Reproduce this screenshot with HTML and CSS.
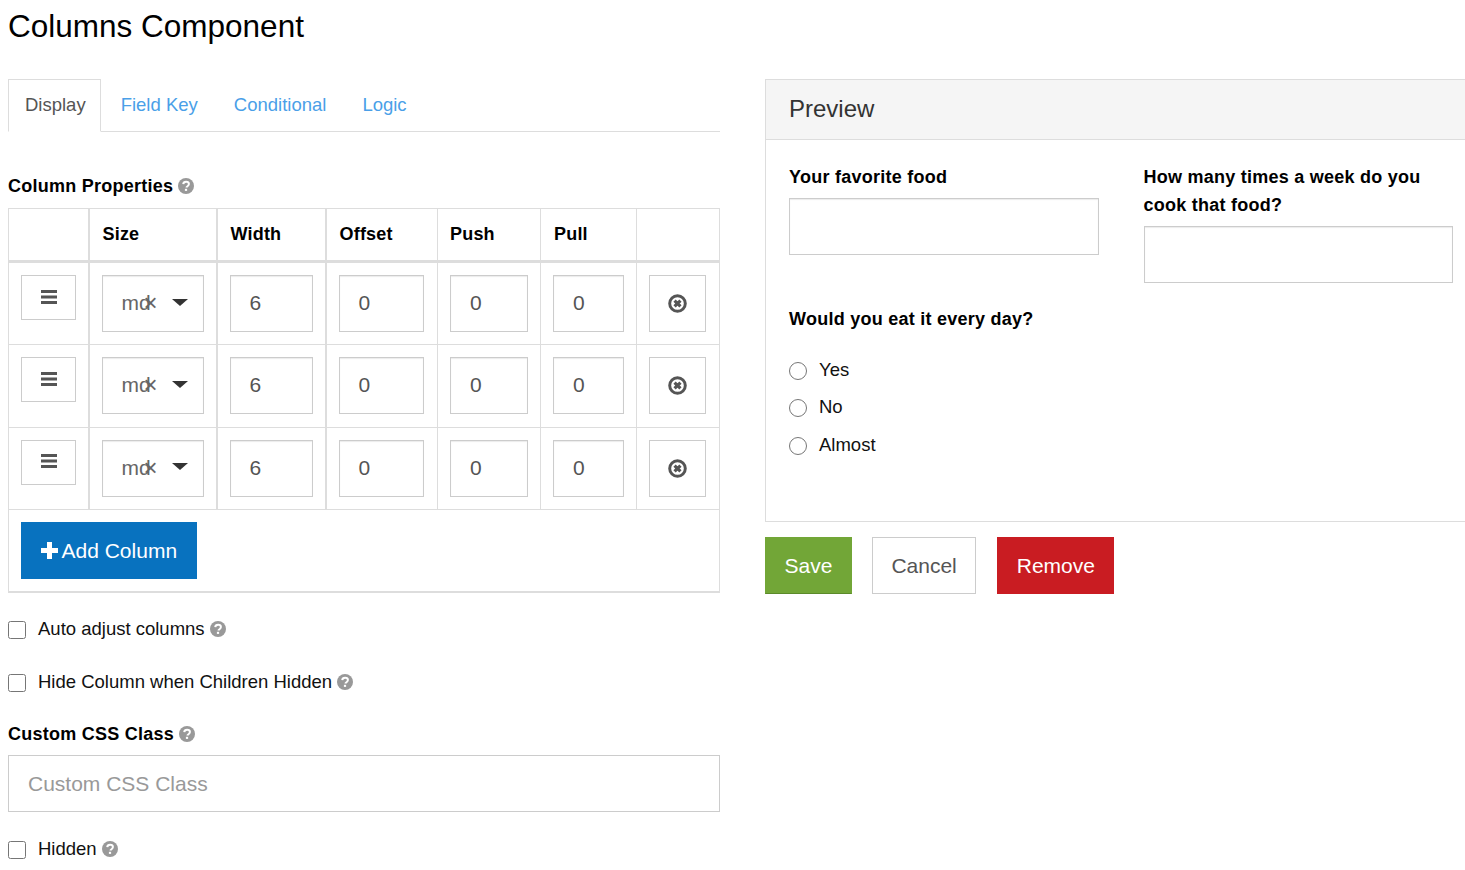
FILE: index.html
```html
<!DOCTYPE html>
<html lang="en">
<head>
    <meta charset="UTF-8">
    <meta name="viewport" content="width=device-width, initial-scale=1.0">
    <title>Columns Component</title>
    <link rel="stylesheet" href="styles.css">
</head>
<body>
    <svg class="defs" width="0" height="0">
        <symbol id="help" viewBox="0 0 16 16">
            <circle cx="8" cy="8" r="8" fill="#999"/>
            <path d="M5.2 6.2C5.4 4.6 6.6 3.8 8.1 3.8c1.600 0 2.800 1 2.800 2.300 0 1.200-.8 1.700-1.500 2.200-.6.4-.9.700-.9 1.300" fill="none" stroke="#fff" stroke-width="2"/>
            <rect x="6.900" y="10.800" width="2.200" height="2.100" fill="#fff"/>
        </symbol>
        <symbol id="bars" viewBox="0 0 16 14">
            <path d="M0 0h16v3H0zM0 5.500h16v3H0zM0 11h16v3H0z" fill="#555"/>
        </symbol>
        <symbol id="remove" viewBox="0 0 18 18">
            <circle cx="9" cy="9" r="7.400" fill="none" stroke="#555" stroke-width="2.800"/>
            <path d="M6.200 6.200l5.600 5.600M11.800 6.200l-5.600 5.600" stroke="#555" stroke-width="3"/>
        </symbol>
    </svg>

    <h1 class="title">Columns Component</h1>

    <div class="layout">
        <div class="left">
            <div class="tabs">
                <a class="tab active" href="#">Display</a>
                <a class="tab" href="#">Field Key</a>
                <a class="tab" href="#">Conditional</a>
                <a class="tab" href="#">Logic</a>
            </div>

            <div class="field-label table-label">Column Properties <svg class="help"><use href="#help"/></svg></div>
            <table class="columns">
                <colgroup>
                    <col class="c-drag"><col class="c-size"><col class="c-width"><col class="c-offset"><col class="c-push"><col class="c-pull"><col class="c-del">
                </colgroup>
                <thead>
                    <tr><th></th><th>Size</th><th>Width</th><th>Offset</th><th>Push</th><th>Pull</th><th></th></tr>
                </thead>
                <tbody>
                    <tr>
                        <td><button class="icon-btn drag"><svg class="bars"><use href="#bars"/></svg></button></td>
                        <td><div class="select"><span class="select-value">md</span><span class="select-x">×</span><span class="caret"></span></div></td>
                        <td><div class="input num">6</div></td>
                        <td><div class="input num">0</div></td>
                        <td><div class="input num">0</div></td>
                        <td><div class="input num">0</div></td>
                        <td><button class="icon-btn del"><svg class="remove"><use href="#remove"/></svg></button></td>
                    </tr>
                    <tr>
                        <td><button class="icon-btn drag"><svg class="bars"><use href="#bars"/></svg></button></td>
                        <td><div class="select"><span class="select-value">md</span><span class="select-x">×</span><span class="caret"></span></div></td>
                        <td><div class="input num">6</div></td>
                        <td><div class="input num">0</div></td>
                        <td><div class="input num">0</div></td>
                        <td><div class="input num">0</div></td>
                        <td><button class="icon-btn del"><svg class="remove"><use href="#remove"/></svg></button></td>
                    </tr>
                    <tr>
                        <td><button class="icon-btn drag"><svg class="bars"><use href="#bars"/></svg></button></td>
                        <td><div class="select"><span class="select-value">md</span><span class="select-x">×</span><span class="caret"></span></div></td>
                        <td><div class="input num">6</div></td>
                        <td><div class="input num">0</div></td>
                        <td><div class="input num">0</div></td>
                        <td><div class="input num">0</div></td>
                        <td><button class="icon-btn del"><svg class="remove"><use href="#remove"/></svg></button></td>
                    </tr>
                </tbody>
                <tfoot>
                    <tr>
                        <td colspan="7"><button class="btn btn-primary"><span class="plus"></span>Add Column</button></td>
                    </tr>
                </tfoot>
            </table>

            <label class="check check-first"><input type="checkbox"><span>Auto adjust columns</span><svg class="help"><use href="#help"/></svg></label>
            <label class="check"><input type="checkbox"><span>Hide Column when Children Hidden</span><svg class="help"><use href="#help"/></svg></label>

            <div class="field-label css-label">Custom CSS Class <svg class="help"><use href="#help"/></svg></div>
            <div class="input css-input">Custom CSS Class</div>

            <label class="check check-last"><input type="checkbox"><span>Hidden</span><svg class="help"><use href="#help"/></svg></label>
        </div>

        <div class="right">
            <div class="panel">
                <div class="panel-head">Preview</div>
                <div class="panel-body">
                    <div class="preview-row">
                        <div>
                            <div class="field-label">Your favorite food</div>
                            <div class="input preview-input"></div>
                        </div>
                        <div>
                            <div class="field-label">How many times a week do you cook that food?</div>
                            <div class="input preview-input"></div>
                        </div>
                    </div>
                    <div class="field-label question">Would you eat it every day?</div>
                    <label class="radio"><input type="radio" name="daily"><span>Yes</span></label>
                    <label class="radio"><input type="radio" name="daily"><span>No</span></label>
                    <label class="radio"><input type="radio" name="daily"><span>Almost</span></label>
                </div>
            </div>
            <div class="actions">
                <button class="btn btn-save">Save</button>
                <button class="btn btn-cancel">Cancel</button>
                <button class="btn btn-remove">Remove</button>
            </div>
        </div>
    </div>
</body>
</html>
```

FILE: styles.css
```css
html, body { height: 870px; overflow: hidden; }
body { font-family: "Liberation Sans", Arial, sans-serif; margin: 0; padding: 0 8px; background-color: #fff; color: #000; font-size: 18.500px; }
.defs { position: absolute; }

.title { font-size: 31.500px; font-weight: 400; line-height: 36px; margin: 8px 0 35px; }
.layout { display: flex; gap: 45px; align-items: flex-start; }
.left { width: 712px; flex-shrink: 0; }
.right { width: 712px; flex-shrink: 0; }

.tabs { display: flex; height: 53px; border-bottom: 1px solid #ddd; box-sizing: border-box; }
.tab { color: #4a9fe8; text-decoration: none; padding: 15px 18px 0; line-height: 22px; }
.tab.active { color: #555; border: 1px solid #ddd; border-bottom: 1px solid #fff; height: 53px; box-sizing: border-box; padding: 14px 14px 0 16px; margin-right: 2px; }

.field-label { font-size: 18px; font-weight: 700; line-height: 28px; letter-spacing: .25px; }
.table-label { margin-top: 40px; line-height: 28px; margin-bottom: 8px; }
.table-label .help { margin-left: -1px; }
.help { width: 16px; height: 16px; vertical-align: -2px; }

.columns { border-collapse: collapse; width: 711px; table-layout: fixed; }
.columns th, .columns td { border: 1px solid #ddd; padding: 12px; text-align: left; box-sizing: border-box; }
.columns th:nth-child(-n+3), .columns tbody td:nth-child(-n+3) { border-right-width: 2px; }
.columns tbody td:nth-child(4) { padding-right: 13px; }
.columns th { font-size: 18px; height: 53px; padding-top: 0; padding-bottom: 0; border-bottom: 3px solid #ddd; letter-spacing: .2px; }
.columns th:nth-child(n+2):nth-child(-n+4), .columns th:nth-child(6) { padding-left: 13px; }
.columns tbody td { height: 82.500px; vertical-align: top; }
.c-drag { width: 80px; }
.c-size { width: 128px; }
.c-width { width: 109px; }
.c-offset { width: 112px; }
.c-push { width: 103px; }
.c-pull { width: 96px; }
.c-del { width: 83px; }
.columns tfoot td { border-bottom: 2px solid #ddd; height: 82px; }

.input { border: 1px solid #ccc; box-sizing: border-box; background: #fff; box-shadow: inset 0 1px 1px rgba(0, 0, 0, .08); color: #555; }
.num { height: 57px; line-height: 54px; padding-left: 19px; font-size: 21px; }
.select { display: flex; align-items: center; height: 57px; border: 1px solid #ccc; box-sizing: border-box; padding: 0 0 1px 19px; color: #666; font-size: 21px; box-shadow: inset 0 1px 1px rgba(0, 0, 0, .08); }
.select-value { width: 29px; flex-shrink: 0; }
.select-x { margin-left: -7px; font-size: 24px; color: #666; width: 12px; }
.caret { margin: 0 0 2px 16px; border-left: 8px solid transparent; border-right: 8px solid transparent; border-top: 7px solid #333; }

.icon-btn { display: flex; align-items: center; justify-content: center; background: #fff; border: 1px solid #ccc; padding: 0; box-sizing: border-box; }
.drag { width: 55px; height: 45px; padding-bottom: 2px; }
.del { width: 57px; height: 57px; }
.bars { width: 16px; height: 14px; }
.remove { width: 19px; height: 19px; }

.btn { font-family: inherit; font-size: 21px; height: 57px; border: 1px solid transparent; padding: 0 18.500px; cursor: pointer; white-space: nowrap; }
.btn-primary { background-color: #0872bf; color: #fff; display: flex; align-items: center; width: 176px; }
.plus { width: 17px; height: 17px; margin-right: 4px; flex-shrink: 0; background: linear-gradient(#fff, #fff) center / 100% 5px no-repeat, linear-gradient(#fff, #fff) center / 5px 100% no-repeat; }

.check { display: flex; align-items: center; height: 24px; line-height: 24px; color: #111; }
.check input { width: 18px; height: 18px; margin: 2px 12px 0 0; }
.check .help { margin-left: 5px; }
.check-first { margin-top: 24px; }
.check + .check { margin-top: 29px; }
.css-label { margin-top: 26px; margin-bottom: 7px; }
.css-input { height: 57px; line-height: 55px; padding-left: 19px; font-size: 21px; color: #999; box-shadow: none; }
.check-last { margin-top: 25px; }

.panel { border: 1px solid #ddd; box-sizing: border-box; height: 443px; }
.panel-head { background: #f5f5f5; border-bottom: 1px solid #ddd; height: 60px; box-sizing: border-box; padding: 0 23px; line-height: 58px; font-size: 24px; color: #333; }
.panel-body { padding: 23px 23px 0; }
.preview-row { display: grid; grid-template-columns: 1fr 1fr; gap: 45px; }
.preview-input { height: 57px; margin-top: 7px; }
.question { margin-top: 22px; margin-bottom: 25px; }
.radio { display: flex; align-items: center; height: 24px; margin-bottom: 13.400px; color: #111; }
.radio input { width: 18px; height: 18px; margin: 2px 12px 0 0; }

.actions { display: flex; gap: 20px; margin-top: 15px; }
.btn-save { background: #72a637; color: #fff; border-bottom: 1px solid #5b8a2a; }
.btn-cancel { background: #fff; color: #555; border-color: #ccc; min-width: 104px; }
.btn-remove { background: #c91c22; color: #fff; margin-left: 1px; }
```
